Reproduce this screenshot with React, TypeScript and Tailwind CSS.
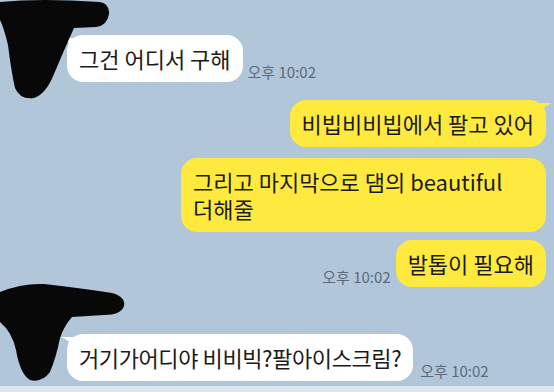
import type { ReactNode } from "react";

const FONT = "font-['Noto_Sans_CJK_KR','Noto_Sans',sans-serif]";

function TimeStamp() {
  return <span className="shrink-0 pb-[1px] text-[15px] leading-[18px] text-[#5a6a7c]">오후 10:02</span>;
}

function Bubble({ mine, tail, className = "", children }: { mine?: boolean; tail?: boolean; className?: string; children: ReactNode }) {
  return (
    <div
      className={`relative rounded-[16px] px-[12px] py-[10px] text-[22px] leading-[27px] text-[#1b1b1b] break-keep ${
        mine ? "bg-[#fee93f]" : "bg-white"
      } ${className}`}
    >
      {tail && !mine && (
        <svg className="absolute -left-[6px] top-[3px]" width="12" height="10" viewBox="0 0 12 10">
          <path d="M0 0 L12 0 L12 10 Q8 3 0 0 Z" fill="#ffffff" />
        </svg>
      )}
      {tail && mine && (
        <svg className="absolute -right-[6px] top-[3px]" width="12" height="10" viewBox="0 0 12 10">
          <path d="M12 0 L0 0 L0 10 Q4 3 12 0 Z" fill="#fee93f" />
        </svg>
      )}
      {children}
    </div>
  );
}

export default function App() {
  return (
    <div className={`relative flex h-[392px] w-[554px] flex-col overflow-hidden bg-[#b2c6d9] ${FONT}`}>
      <div className="flex flex-1 flex-col pt-[35px] pr-[8px]">
        <div className="flex items-end gap-[5px] pl-[67px]">
          <Bubble tail>그건 어디서 구해</Bubble>
          <TimeStamp />
        </div>

        <div className="mt-[18px] flex justify-end">
          <Bubble mine tail>비빕비비빕에서 팔고 있어</Bubble>
        </div>

        <div className="mt-[11px] flex justify-end">
          <Bubble mine className="w-[365px]">그리고 마지막으로 댐의 beautiful 더해줄</Bubble>
        </div>

        <div className="mt-[8px] flex items-end justify-end gap-[5px]">
          <TimeStamp />
          <Bubble mine>발톱이 필요해</Bubble>
        </div>

        <div className="mt-[47px] flex items-end gap-[7px] pl-[67px]">
          <Bubble tail className="tracking-[-0.4px]">거기가어디야 비비빅?팔아이스크림?</Bubble>
          <TimeStamp />
        </div>
      </div>

      <div className="h-[6px] bg-[#dde5ec]" />

      {/* censor marks drawn over the profile pictures */}
      <svg className="absolute left-0 top-0" width="130" height="392" viewBox="0 0 130 392">
        <path
          d="M0 2 Q40 -2 100 2 Q110 4 109 14 Q107 26 96 27 L74 28 Q64 50 54 74 Q46 94 34 98 Q20 100 15 88 Q11 70 8 45 Q4 28 0 20 Z"
          fill="#080808"
        />
        <path
          d="M0 292 Q22 283 44 284 Q80 288 112 293 Q126 297 124 306 Q121 315 104 315 L72 317 Q64 326 60 338 Q56 358 50 372 Q42 383 30 380 Q20 374 16 350 Q12 332 0 322 Z"
          fill="#080808"
        />
      </svg>
    </div>
  );
}
